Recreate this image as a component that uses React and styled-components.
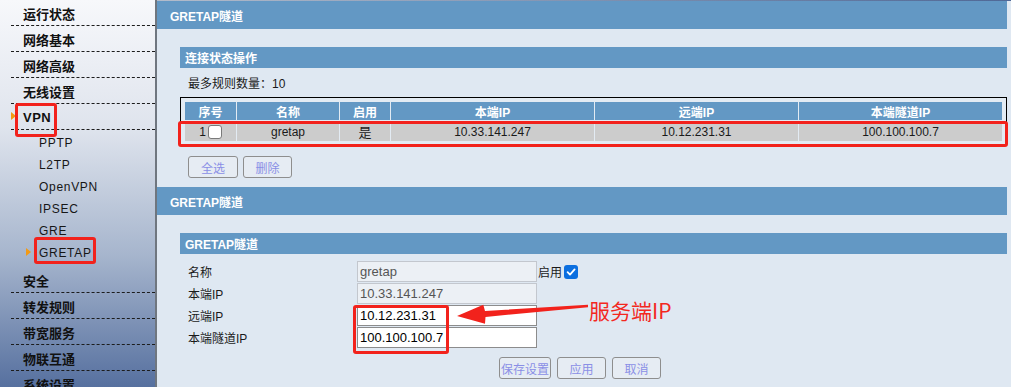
import React from 'react';
import styled, { createGlobalStyle } from 'styled-components';

const Global = createGlobalStyle`
  html, body { margin: 0; padding: 0; }
  body {
    font-family: "Liberation Sans", "Noto Sans CJK SC", sans-serif;
    font-size: 12px;
    color: #111;
    background: #dfe8f2;
  }
  * { box-sizing: border-box; }
`;

const Page = styled.div`
  position: relative;
  display: flex;
  width: 1011px;
  height: 387px;
  overflow: hidden;
`;

const Sidebar = styled.nav`
  width: 157px;
  flex: none;
  padding-left: 11px;
  border-right: 2px solid #6f767f;
  background: linear-gradient(to bottom, #f7f8fb 0%, #dfe4ed 33%, #a6b5cd 66%, #56709f 100%);
`;

const Marker = styled.span`
  position: absolute;
  left: ${(p) => p.$left}px;
  top: 50%;
  margin-top: -5px;
  width: 0;
  height: 0;
  border-left: 5px solid #f39a14;
  border-top: 4.5px solid transparent;
  border-bottom: 4.5px solid transparent;
`;

const MenuItem = styled.div`
  position: relative;
  height: 26px;
  padding: 2px 0 0 12px;
  display: flex;
  align-items: center;
  border-bottom: 1px dashed #1c1c1c;
  font-family: ${(p) => (p.$latin ? '"Liberation Sans", sans-serif' : '"Noto Sans CJK SC", sans-serif')};
  font-size: 13px;
  font-weight: 700;
  color: #111;
  letter-spacing: ${(p) => (p.$latin ? '0.5px' : '0')};
`;

const SubMenu = styled.div`
  padding: 2px 0 3px;
`;

const SubItem = styled.div`
  position: relative;
  height: 22px;
  padding-left: 28px;
  display: flex;
  align-items: center;
  font-size: 12px;
  letter-spacing: 0.7px;
  color: #161616;
`;

const Main = styled.main`
  flex: 1;
  min-width: 0;
  padding-right: 4px;
  background: #dfe8f2;
  border-top: 1px solid;
  border-image: linear-gradient(to right, #b3bccb, #4f6896) 1;
`;

const Header = styled.div`
  height: 28px;
  margin-top: ${(p) => p.$mt || 0}px;
  padding-left: 13px;
  display: flex;
  align-items: center;
  background: #6398c4;
  color: #fff;
  font-weight: 700;
  font-size: 12px;
`;

const Section = styled.section`
  padding: 18px 0 0 23px;
`;

const SubBar = styled.div`
  height: 21px;
  padding-left: 5px;
  display: flex;
  align-items: center;
  background: #6398c4;
  color: #fff;
  font-weight: 700;
  font-size: 12px;
`;

const Info = styled.div`
  margin: 9px 0 6px 8px;
  line-height: 14px;
  font-size: 12px;
  color: #1a1a1a;
`;

const Table = styled.div`
  display: grid;
  grid-template-columns: 51px 102px 50px 1fr 1fr 1fr;
  grid-template-rows: 18px 19px;
  column-gap: 1px;
  row-gap: 2px;
  padding: 4px;
  border: 1px solid #000;
  background: #e3ebf3;
`;

const Th = styled.div`
  display: flex;
  align-items: center;
  justify-content: center;
  background: #6398c4;
  color: #fff;
  font-weight: 700;
  font-size: 12px;
`;

const Td = styled.div`
  display: flex;
  align-items: center;
  justify-content: center;
  background: #cccccc;
  color: #1a1a1a;
  font-size: ${(p) => (p.$big ? 13 : 12)}px;
`;

const Box = styled.span`
  display: inline-block;
  width: 14px;
  height: 14px;
  margin-left: 2px;
  border: 1px solid #7a7a7a;
  border-radius: 3px;
  background: #fff;
`;

const ButtonRow = styled.div`
  display: flex;
  gap: ${(p) => p.$gap}px;
  margin-top: ${(p) => p.$mt}px;
  padding-left: ${(p) => p.$pl}px;
`;

const Button = styled.button`
  width: ${(p) => p.$w}px;
  height: 22px;
  padding: 0;
  border: 1px solid #8e8e8e;
  border-radius: 3px;
  background: #e6ecf3;
  color: #8a8fe6;
  font-family: "Liberation Sans", "Noto Sans CJK SC", sans-serif;
  font-size: 12px;
  white-space: nowrap;
  overflow: visible;
  display: flex;
  align-items: center;
  justify-content: center;
`;

const Form = styled.div`
  display: grid;
  grid-template-columns: 169px 180px auto;
  grid-auto-rows: 22px;
  margin-top: 7px;
  padding-left: 8px;
  align-items: start;
`;

const Label = styled.div`
  height: 21px;
  display: flex;
  align-items: center;
  font-size: 12px;
  color: #1a1a1a;
`;

const Input = styled.div`
  height: 21px;
  padding: 0 2px;
  display: flex;
  align-items: center;
  font-size: 13px;
  border: 1px solid ${(p) => (p.$disabled ? '#c3c7ce' : '#8c8c8c')};
  background: ${(p) => (p.$disabled ? '#ecf0f5' : '#fff')};
  color: ${(p) => (p.$disabled ? '#555' : '#000')};
`;

const Enable = styled.div`
  height: 21px;
  padding-left: 1px;
  display: flex;
  align-items: center;
  gap: 2px;
  font-size: 12px;
  color: #1a1a1a;
`;

const Checked = styled.span`
  width: 14px;
  height: 14px;
  border-radius: 3px;
  background: #0b6fe0;
  display: flex;
  align-items: center;
  justify-content: center;
`;

const RedBox = styled.div`
  position: absolute;
  left: ${(p) => p.$x}px;
  top: ${(p) => p.$y}px;
  width: ${(p) => p.$w}px;
  height: ${(p) => p.$h}px;
  border: 3px solid #f2221c;
  border-radius: 3px;
  pointer-events: none;
`;

const Arrow = styled.svg`
  position: absolute;
  left: 450px;
  top: 298px;
  width: 145px;
  height: 32px;
  pointer-events: none;
`;

const Note = styled.div`
  position: absolute;
  left: 589px;
  top: 299px;
  line-height: 22px;
  font-family: "Noto Sans CJK SC", sans-serif;
  font-size: 21px;
  color: #f3281f;
  white-space: nowrap;
`;

const topMenu = ['运行状态', '网络基本', '网络高级', '无线设置'];
const bottomMenu = ['安全', '转发规则', '带宽服务', '物联互通', '系统设置'];
const subMenu = ['PPTP', 'L2TP', 'OpenVPN', 'IPSEC', 'GRE', 'GRETAP'];

export default function App() {
  return (
    <Page>
      <Global />
      <Sidebar>
        {topMenu.map((m) => (
          <MenuItem key={m}>{m}</MenuItem>
        ))}
        <MenuItem $latin>
          <Marker $left={0} />
          VPN
        </MenuItem>
        <SubMenu>
          {subMenu.map((s) => (
            <SubItem key={s}>
              {s === 'GRETAP' && <Marker $left={15} />}
              {s}
            </SubItem>
          ))}
        </SubMenu>
        {bottomMenu.map((m) => (
          <MenuItem key={m}>{m}</MenuItem>
        ))}
      </Sidebar>

      <Main>
        <Header>GRETAP隧道</Header>
        <Section>
          <SubBar>连接状态操作</SubBar>
          <Info>最多规则数量：10</Info>
          <Table>
            <Th>序号</Th>
            <Th>名称</Th>
            <Th>启用</Th>
            <Th>本端IP</Th>
            <Th>远端IP</Th>
            <Th>本端隧道IP</Th>
            <Td>
              1<Box />
            </Td>
            <Td>gretap</Td>
            <Td $big>是</Td>
            <Td>10.33.141.247</Td>
            <Td>10.12.231.31</Td>
            <Td>100.100.100.7</Td>
          </Table>
          <ButtonRow $gap={5} $mt={10} $pl={8}>
            <Button $w={50}>全选</Button>
            <Button $w={49}>删除</Button>
          </ButtonRow>
        </Section>

        <Header $mt={9}>GRETAP隧道</Header>
        <Section>
          <SubBar>GRETAP隧道</SubBar>
          <Form>
            <Label>名称</Label>
            <Input $disabled>gretap</Input>
            <Enable>
              启用
              <Checked>
                <svg width="10" height="10" viewBox="0 0 10 10">
                  <path d="M1.6 5.2 L4 7.6 L8.6 2.4" fill="none" stroke="#fff" strokeWidth="1.8" strokeLinecap="round" strokeLinejoin="round" />
                </svg>
              </Checked>
            </Enable>
            <Label>本端IP</Label>
            <Input $disabled>10.33.141.247</Input>
            <span />
            <Label>远端IP</Label>
            <Input>10.12.231.31</Input>
            <span />
            <Label>本端隧道IP</Label>
            <Input>100.100.100.7</Input>
            <span />
          </Form>
          <ButtonRow $gap={6} $mt={8} $pl={319}>
            <Button $w={52}>保存设置</Button>
            <Button $w={49}>应用</Button>
            <Button $w={49}>取消</Button>
          </ButtonRow>
        </Section>
      </Main>

      <RedBox $x={15} $y={103} $w={42} $h={34} />
      <RedBox $x={34} $y={237} $w={62} $h={27} />
      <RedBox $x={178} $y={121} $w={830} $h={26} />
      <RedBox $x={353} $y={305} $w={96} $h={49} />
      <Arrow viewBox="450 298 145 32">
        <polygon
          points="588,304.8 485,310.9 483.3,304.8 457,316 485,323.8 485.5,316.9 588,307.2"
          fill="#f2221c"
        />
      </Arrow>
      <Note>服务端IP</Note>
    </Page>
  );
}
